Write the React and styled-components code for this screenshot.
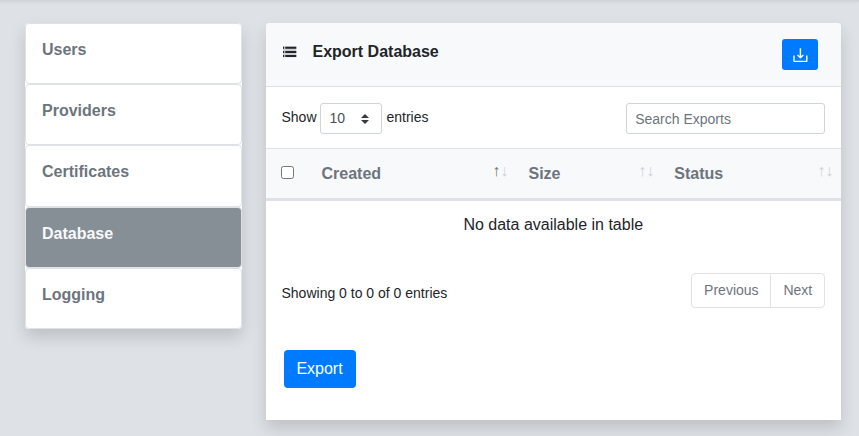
import React from "react";
import styled, { createGlobalStyle, css } from "styled-components";

const GlobalStyle = createGlobalStyle`
  *, *::before, *::after { box-sizing: border-box; }
  body {
    margin: 0;
    background: #dee2e6;
    color: #212529;
    font: 400 16px/1.5 "Liberation Sans", Arial, sans-serif;
    overflow: hidden;
  }
`;

const Page = styled.div`
  height: 436px;
  padding: 23px 18px 0 25px;
  display: flex;
  align-items: flex-start;
  gap: 24px;
  background: linear-gradient(rgba(0, 0, 0, 0.07), rgba(0, 0, 0, 0) 4px);
`;

const Sidebar = styled.nav`
  width: 217px;
  border-radius: 4px;
  background: #fff;
  box-shadow: 0 8px 16px rgba(0, 0, 0, 0.15);
`;

const NavItem = styled.a`
  display: block;
  height: 61.2px;
  padding: 13.95px 16px 0;
  border: 1px solid #dee2e6;
  border-radius: 4px;
  font-weight: 700;
  color: ${(p) => (p.$active ? "#f8f9fa" : "#6c757d")};
  background: ${(p) => (p.$active ? "#868e96" : "#fff")};
`;

const Card = styled.main`
  width: 575px;
  height: 397px;
  background: #fff;
  border-radius: 4px 4px 0 0;
  box-shadow: 0 8px 16px rgba(0, 0, 0, 0.15);
`;

const CardHeader = styled.header`
  height: 64px;
  padding: 16px 23px 0 16px;
  display: flex;
  align-items: flex-start;
  background: #f8f9fa;
  border-bottom: 1px solid #dee2e6;
  border-radius: 4px 4px 0 0;
`;

const ListIcon = styled.svg`
  width: 16px;
  height: 16px;
  margin-top: 5px;
`;

const Title = styled.h1`
  margin: 1px 0 0 14.5px;
  flex: 1;
  font-size: 16px;
  font-weight: 700;
`;

const Button = styled.button`
  display: flex;
  align-items: center;
  justify-content: center;
  padding: 0;
  border: 0;
  border-radius: ${(p) => (p.$small ? "3px" : "4px")};
  width: ${(p) => (p.$small ? "36px" : "72px")};
  height: ${(p) => (p.$small ? "31px" : "38px")};
  background: #007bff;
  color: #fff;
  font: inherit;
`;

const ButtonLabel = styled.span`
  margin-right: 1px;
`;

const Controls = styled.div`
  height: 61px;
  padding: 16px 16px 0 15.5px;
  display: flex;
  justify-content: space-between;
  align-items: flex-start;
  font-size: 14px;
`;

const Length = styled.label`
  display: flex;
  align-items: center;
  gap: 3.5px;
  line-height: 29px;
  height: 29px;
`;

const field = css`
  height: 31px;
  border: 1px solid #ced4da;
  border-radius: 3px;
  background: #fff;
  color: #495057;
  font: inherit;
`;

const Select = styled.span`
  ${field}
  width: 62px;
  margin: 2px 0.9px 0 0;
  padding: 0 12px 0 8.5px;
  display: flex;
  align-items: center;
  justify-content: space-between;
`;

const Search = styled.input`
  ${field}
  width: 199px;
  padding: 1px 8px 0 8.2px;
  &::placeholder { color: #6c757d; opacity: 1; }
`;

const Table = styled.table`
  width: 575px;
  table-layout: fixed;
  border-collapse: separate;
  border-spacing: 0;
`;

const Th = styled.th`
  width: ${(p) => p.$width}px;
  height: 53px;
  padding: 0 0 0 ${(p) => p.$pad}px;
  border-top: 1px solid #dee2e6;
  border-bottom: 3px solid #dee2e6;
  background: #f8f9fa;
  color: #6c757d;
  text-align: left;
  vertical-align: middle;
`;

const HeadCell = styled.div`
  display: flex;
  justify-content: space-between;
  align-items: flex-start;
  padding-right: 7.8px;
`;

const Arrows = styled.span`
  display: flex;
  margin-top: -3px;
`;

const Arrow = styled.span`
  width: 8px;
  text-align: center;
  opacity: ${(p) => (p.$on ? 0.99 : 0.3)};
`;

const Checkbox = styled.input`
  display: block;
  width: 13px;
  height: 13px;
  margin: -3px 0 0;
`;

const Empty = styled.td`
  height: 48px;
  padding: 0 0.5px 0 0;
  text-align: center;
`;

const Footer = styled.div`
  height: 60px;
  padding: 24px 16px 0 15.5px;
  display: flex;
  justify-content: space-between;
  align-items: flex-start;
  font-size: 14px;
`;

const Info = styled.div`
  padding-top: 10px;
`;

const Pagination = styled.div`
  display: flex;
  height: 35px;
  border: 1px solid #dee2e6;
  border-radius: 4px;
  color: #6c757d;
`;

const PageLink = styled.span`
  width: ${(p) => p.$width}px;
  padding-left: 0.7px;
  text-align: center;
  line-height: 32px;
  & + & { border-left: 1px solid #dee2e6; }
`;

const Actions = styled.div`
  padding: 41px 0 0 18px;
`;

const NAV = ["Users", "Providers", "Certificates", "Database", "Logging"];

function Sort({ label, asc }) {
  return (
    <HeadCell>
      {label}
      <Arrows>
        <Arrow $on={asc}>↑</Arrow>
        <Arrow>↓</Arrow>
      </Arrows>
    </HeadCell>
  );
}

export default function App() {
  return (
    <>
      <GlobalStyle />
      <Page>
        <Sidebar>
          {NAV.map((n) => (
            <NavItem key={n} $active={n === "Database"}>{n}</NavItem>
          ))}
        </Sidebar>
        <Card>
          <CardHeader>
            <ListIcon viewBox="0 0 16 16" fill="#212529">
              <path d="M1 2.7h1.2v2H1zM1 6.9h1.2v2H1zM1 11h1.2v2H1z" />
              <path d="M3.3 2.7h11v2h-11zM3.3 6.9h11v2h-11zM3.3 11h11v2h-11z" />
              <path d="M1 2.2h13.3v11.1H1z" opacity="0.2" />
            </ListIcon>
            <Title>Export Database</Title>
            <Button $small aria-label="Download">
              <svg
                width="16"
                height="16"
                viewBox="0 0 16 16"
                fill="none"
                stroke="#fff"
                strokeWidth="1.4"
                strokeLinejoin="round"
              >
                <path d="M2 8.6v5.3q0 .5.5.5h11.8q.5 0 .5-.5V8.6M8.4 1.3v9M5.5 7.9l2.9 2.8 2.9-2.8" />
              </svg>
            </Button>
          </CardHeader>
          <Controls>
            <Length>
              Show
              <Select>
                10
                <svg width="8" height="10" viewBox="0 0 4 5" fill="#343a40">
                  <path d="M2 0 0 2h4zm0 5L0 3h4z" />
                </svg>
              </Select>
              entries
            </Length>
            <Search placeholder="Search Exports" />
          </Controls>
          <Table>
            <thead>
              <tr>
                <Th $width={43} $pad={15}><Checkbox type="checkbox" /></Th>
                <Th $width={207} $pad={12.5}><Sort label="Created" asc /></Th>
                <Th $width={146} $pad={12.5}><Sort label="Size" /></Th>
                <Th $width={179} $pad={12.3}><Sort label="Status" /></Th>
              </tr>
            </thead>
            <tbody>
              <tr><Empty colSpan={4}>No data available in table</Empty></tr>
            </tbody>
          </Table>
          <Footer>
            <Info>Showing 0 to 0 of 0 entries</Info>
            <Pagination>
              <PageLink $width={78}>Previous</PageLink>
              <PageLink $width={54}>Next</PageLink>
            </Pagination>
          </Footer>
          <Actions><Button><ButtonLabel>Export</ButtonLabel></Button></Actions>
        </Card>
      </Page>
    </>
  );
}
